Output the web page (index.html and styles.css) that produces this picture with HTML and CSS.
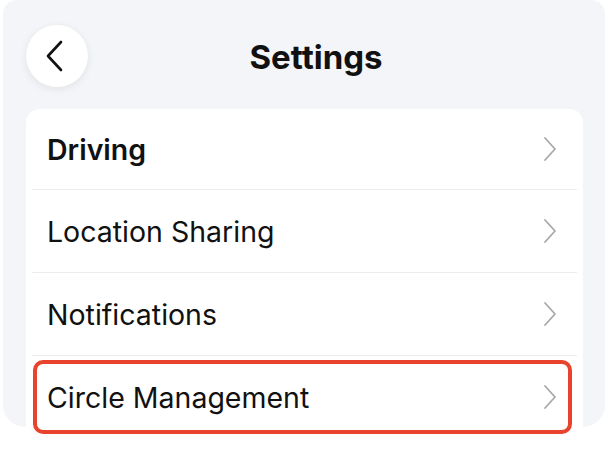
FILE: index.html
```html
<!DOCTYPE html>
<html>
<head>
<meta charset="utf-8">
<link rel="stylesheet" href="styles.css">
</head>
<body>
<div class="panel">
  <div class="header">
    <div class="back">
      <svg width="20" height="32" viewBox="0 0 20 32"><path d="M16 2 L3 16 L16 30" fill="none" stroke="#111" stroke-width="2.6" stroke-linecap="round" stroke-linejoin="round"/></svg>
    </div>
    <div class="title">Settings</div>
  </div>
  <div class="card">
    <div class="row first"><span class="label bold">Driving</span><svg class="chev" width="14" height="26" viewBox="0 0 14 26"><path d="M2 2 L12 13 L2 24" fill="none" stroke="#a8a8a8" stroke-width="1.8" stroke-linecap="round" stroke-linejoin="round"/></svg></div>
    <div class="row"><span class="label">Location Sharing</span><svg class="chev" width="14" height="26" viewBox="0 0 14 26"><path d="M2 2 L12 13 L2 24" fill="none" stroke="#a8a8a8" stroke-width="1.8" stroke-linecap="round" stroke-linejoin="round"/></svg></div>
    <div class="row"><span class="label">Notifications</span><svg class="chev" width="14" height="26" viewBox="0 0 14 26"><path d="M2 2 L12 13 L2 24" fill="none" stroke="#a8a8a8" stroke-width="1.8" stroke-linecap="round" stroke-linejoin="round"/></svg></div>
    <div class="row highlight"><span class="label">Circle Management</span><svg class="chev" width="14" height="26" viewBox="0 0 14 26"><path d="M2 2 L12 13 L2 24" fill="none" stroke="#a8a8a8" stroke-width="1.8" stroke-linecap="round" stroke-linejoin="round"/></svg></div>
  </div>
</div>
</body>
</html>
```
FILE: styles.css
```css
html, body {
  margin: 0;
  padding: 0;
  background: #ffffff;
}
body {
  font-family: Inter, Roboto, "Liberation Sans", sans-serif;
  color: #111111;
  width: 614px;
  height: 476px;
  overflow: hidden;
}
.panel {
  margin: 0 9px 0 3px;
  height: 427px;
  background: #f4f5f8;
  border-radius: 14px 14px 22px 22px;
}
.header {
  height: 109px;
  display: flex;
  align-items: center;
  position: relative;
  padding-left: 23px;
  box-sizing: border-box;
}
.back {
  width: 62px;
  height: 62px;
  border-radius: 50%;
  background: #ffffff;
  box-shadow: 0 2px 8px rgba(0,0,0,0.08);
  display: flex;
  align-items: center;
  justify-content: center;
  margin-top: 3px;
}
.back svg {
  margin-left: -4px;
}
.title {
  position: absolute;
  left: 0;
  right: 0;
  top: 0;
  height: 109px;
  display: flex;
  align-items: center;
  justify-content: center;
  font-size: 33px;
  font-weight: 700;
  padding-left: 24px;
  padding-top: 4px;
  box-sizing: border-box;
  pointer-events: none;
}
.card {
  margin: 0 22px 0 23px;
  background: #ffffff;
  border-radius: 14px 14px 0 0;
}
.row {
  height: 82px;
  display: flex;
  align-items: center;
  justify-content: space-between;
  padding: 0 20px 0 15px;
  border-top: 1px solid #ececec;
  margin: 0 6px;
  position: relative;
}
.row.first {
  border-top: none;
  height: 80px;
}
.label {
  font-size: 28.5px;
  font-weight: 400;
}
.label.bold {
  font-weight: 600;
}
.chev {
  display: block;
}
.highlight::after {
  content: "";
  position: absolute;
  left: 1px;
  right: 5px;
  top: 4px;
  bottom: 4px;
  border: 4px solid #e8442d;
  border-radius: 10px;
}
```
